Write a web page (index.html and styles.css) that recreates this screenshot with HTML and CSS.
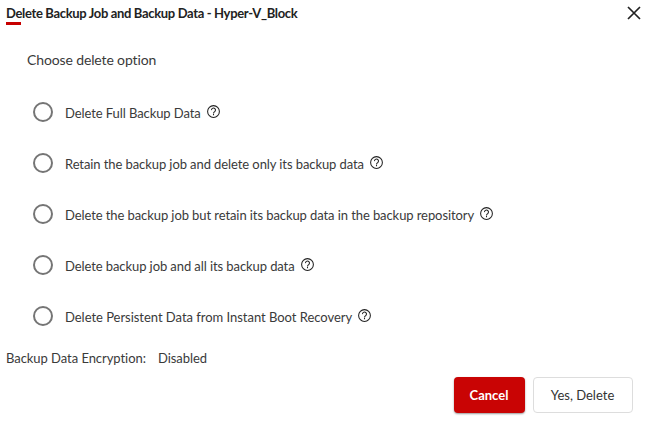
FILE: index.html
```html
<!DOCTYPE html>
<html lang="en">
<head>
    <meta charset="UTF-8">
    <meta name="viewport" content="width=device-width, initial-scale=1.0">
    <title>Delete Backup Job</title>
    <link rel="stylesheet" href="styles.css">
</head>
<body>
    <svg class="sprite">
        <symbol id="help" viewBox="0 0 13 13">
            <circle cx="6.5" cy="6.5" r="5.9" fill="none" stroke="#222" stroke-width="1.05"/>
            <path d="M4.5 5.1a2 2 0 1 1 3.3 1.4c-.8.6-1.3.9-1.3 1.9M6.5 9.1v1.2" fill="none" stroke="#222" stroke-width="1.05"/>
        </symbol>
    </svg>
    <div class="dialog">
        <div class="dialog-header">
            <h2 class="title">Delete Backup Job and Backup Data - Hyper-V_Block</h2>
            <button type="button" class="close-btn" aria-label="Close">
                <svg width="14" height="14" viewBox="0 0 14 14"><path d="M1 1l12 12M13 1L1 13" stroke="#222" stroke-width="1.7"/></svg>
            </button>
        </div>
        <form class="options">
            <p class="options-label">Choose delete option</p>
            <label class="option">
                <input type="radio" name="option">
                <span>Delete Full Backup Data</span>
                <svg class="help"><use href="#help"/></svg>
            </label>
            <label class="option">
                <input type="radio" name="option">
                <span>Retain the backup job and delete only its backup data</span>
                <svg class="help"><use href="#help"/></svg>
            </label>
            <label class="option">
                <input type="radio" name="option">
                <span>Delete the backup job but retain its backup data in the backup repository</span>
                <svg class="help"><use href="#help"/></svg>
            </label>
            <label class="option">
                <input type="radio" name="option">
                <span>Delete backup job and all its backup data</span>
                <svg class="help"><use href="#help"/></svg>
            </label>
            <label class="option option-persistent">
                <input type="radio" name="option">
                <span>Delete Persistent Data from Instant Boot Recovery</span>
                <svg class="help"><use href="#help"/></svg>
            </label>
        </form>
        <div class="encryption"><span>Backup Data Encryption:</span><span>Disabled</span></div>
        <div class="actions">
            <button type="button" class="btn btn-cancel">Cancel</button>
            <button type="button" class="btn btn-confirm">Yes, Delete</button>
        </div>
    </div>
</body>
</html>
```
FILE: styles.css
```css
* {
    margin: 0;
    padding: 0;
    box-sizing: border-box;
}

body {
    font-family: Lato, sans-serif;
    font-size: 13px;
    font-variant-ligatures: none;
    color: #3a3a3a;
    background-color: #fff;
}

.sprite {
    display: none;
}

.dialog {
    height: 432px;
    padding: 4px 6px 0;
    overflow: hidden;
}

.dialog-header {
    display: flex;
    justify-content: space-between;
    height: 22px;
}

.title {
    position: relative;
    font-size: 13px;
    line-height: 19px;
    font-weight: bold;
    letter-spacing: -0.34px;
    color: #222;
}

.title::after {
    content: "";
    position: absolute;
    left: 0;
    top: 18px;
    width: 15px;
    height: 3px;
    background-color: #c70000;
}

.close-btn {
    width: 14px;
    height: 14px;
    margin: 2px 6px 0 0;
    border: none;
    background: none;
}

.close-btn svg {
    display: block;
}

.options {
    padding: 24px 0 0 21px;
}

.options-label {
    font-size: 14px;
    line-height: 20px;
    letter-spacing: -0.13px;
    margin-bottom: 17px;
}

.option {
    display: flex;
    align-items: center;
    height: 51px;
    padding-left: 6px;
    letter-spacing: -0.085px;
}

.option-persistent {
    letter-spacing: -0.03px;
}

.option input {
    appearance: none;
    width: 20px;
    height: 20px;
    margin: 0 12px 2px 0;
    border: 2px solid #757575;
    border-radius: 50%;
}

.help {
    width: 13px;
    height: 13px;
    margin: 0 0 3px 6px;
}

.encryption {
    display: flex;
    gap: 12px;
    margin-top: 7px;
    line-height: 18px;
    letter-spacing: -0.05px;
}

.actions {
    display: flex;
    justify-content: flex-end;
    gap: 8px;
    padding: 10px 14px 0 0;
}

.btn {
    height: 36px;
    padding-right: 1px;
    border-radius: 4px;
    font-family: inherit;
    font-size: 13px;
}

.btn-cancel {
    width: 71px;
    border: none;
    background-color: #c90404;
    box-shadow: 0 1px 2px rgba(0, 0, 0, 0.4);
    color: #fff;
    font-weight: bold;
}

.btn-confirm {
    width: 100px;
    border: 1px solid #ddd;
    background-color: #fff;
    color: #333;
}
```
